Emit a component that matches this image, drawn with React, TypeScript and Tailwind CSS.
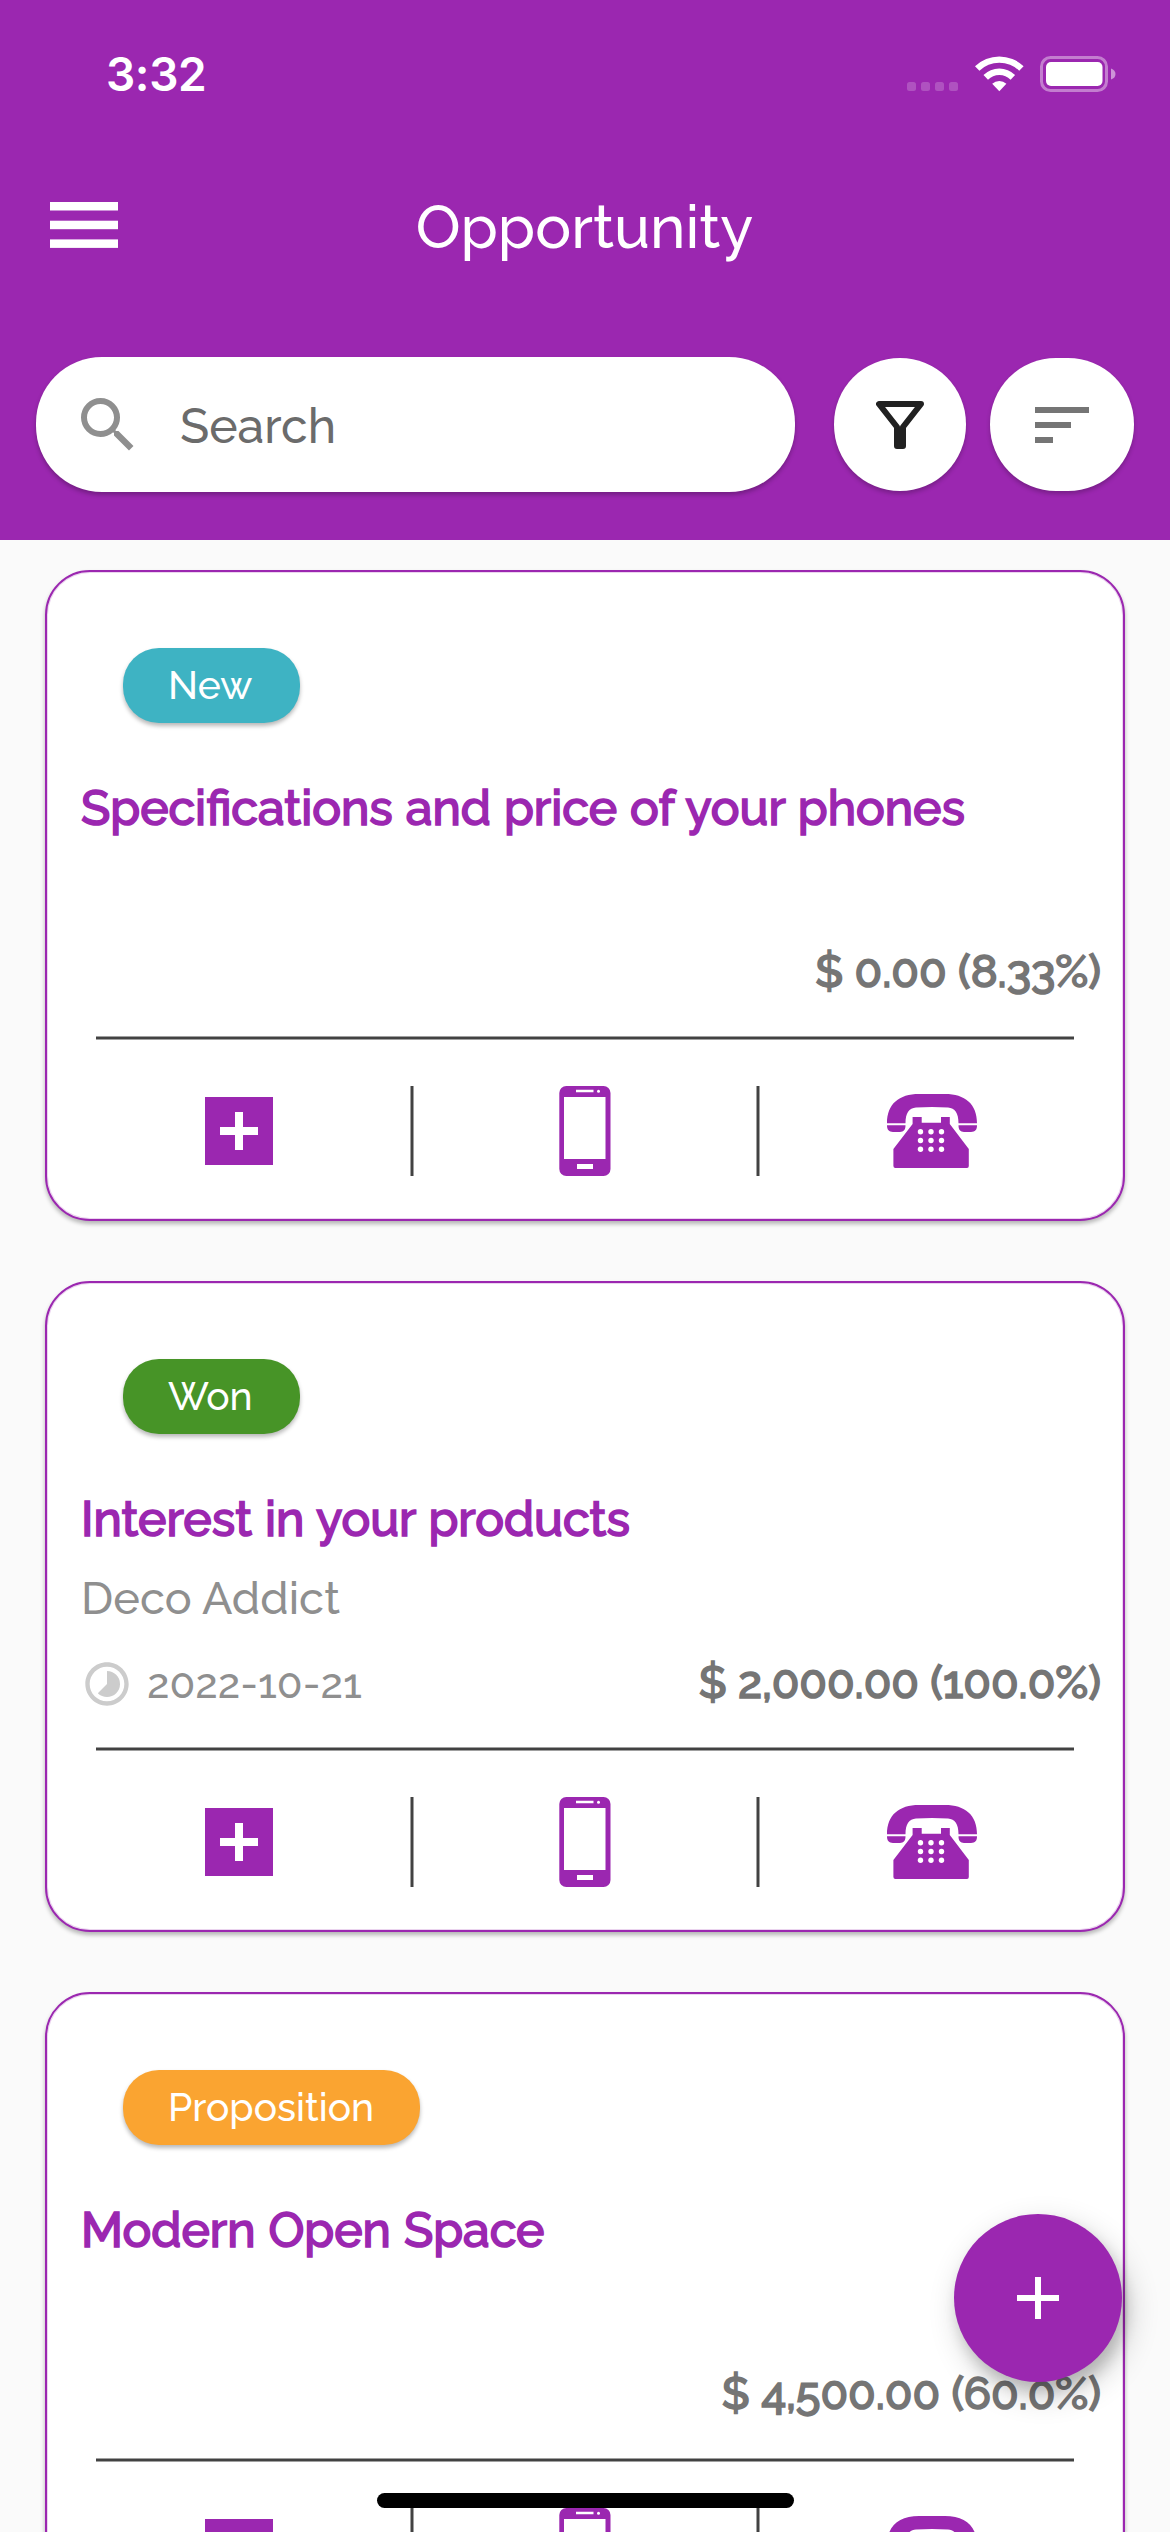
import React from "react";
import { MdSearch, MdSort, MdTimelapse } from "react-icons/md";

type Opportunity = {
  stage: string;
  badge: string;
  title: string;
  price: string;
  customer?: string;
  date?: string;
};

const opportunities: Opportunity[] = [
  {
    stage: "New",
    badge: "w-[177px] bg-[#3eb3c3]",
    title: "Specifications and price of your phones",
    price: "$ 0.00 (8.33%)",
  },
  {
    stage: "Won",
    badge: "w-[177px] bg-[#479427]",
    title: "Interest in your products",
    price: "$ 2,000.00 (100.0%)",
    customer: "Deco Addict",
    date: "2022-10-21",
  },
  {
    stage: "Proposition",
    badge: "w-[297px] bg-[#faa431]",
    title: "Modern Open Space",
    price: "$ 4,500.00 (60.0%)",
  },
];

function StatusBar() {
  return (
    <div className="flex h-[150px] items-start justify-between pl-[106px] pr-[54px] pt-[55px] text-white">
      <span className="mt-[-9px] font-['Inter'] text-[46px] font-semibold leading-[56px] tracking-[-0.4px]">3:32</span>
      <svg width="209" height="38" viewBox="0 0 209 38" fill="white">
        <g opacity="0.2">
          <rect x="0" y="27" width="9" height="9" rx="2.5" />
          <rect x="14" y="27" width="9" height="9" rx="2.5" />
          <rect x="28" y="27" width="9" height="9" rx="2.5" />
          <rect x="42" y="27" width="9" height="9" rx="2.5" />
        </g>
        <path d="M68 11.2a35 35 0 0 1 48.6 0l-4.4 4.6a28.5 28.5 0 0 0-39.800 0z" />
        <path d="M76.500 20a22.500 22.500 0 0 1 31.600 0l-4.500 4.700a16 16 0 0 0-22.600 0z" />
        <path d="M85.200 28.800a10.500 10.500 0 0 1 14.200 0l-7.100 7.400z" />
        <rect x="134.500" y="2.500" width="65" height="33" rx="9" fill="none" stroke="white" strokeWidth="3" opacity="0.4" />
        <rect x="139" y="7" width="56.500" height="24" rx="5" />
        <path d="M204 13.500q4.500 1.500 4.500 5.500t-4.500 5.500z" opacity="0.5" />
      </svg>
    </div>
  );
}

function Header() {
  return (
    <header className="h-[540px] bg-[#9b27b0]">
      <StatusBar />
      <div className="flex h-[150px] items-center px-[50px]">
        <svg width="68" height="46" viewBox="0 0 68 46" fill="white">
          <rect y="0" width="68" height="8.500" />
          <rect y="18.700" width="68" height="8.500" />
          <rect y="37.400" width="68" height="8.500" />
        </svg>
        <h1 className="mt-[4px] flex-1 pr-[69px] text-center text-[60px] font-medium leading-[72px] text-white">Opportunity</h1>
      </div>
      <div className="flex items-center pl-[36px] pr-[36px] pt-[57px]">
        <div className="flex h-[135px] w-[759px] items-center rounded-[66px] bg-white pl-[36px] shadow-[0_3px_4px_rgba(0,0,0,0.25)]">
          <MdSearch size={72} color="#8f8f8f" />
          <span className="ml-[36px] mt-[3px] text-[48px] font-medium leading-[60px] text-[#6b6b6b]">Search</span>
        </div>
        <div className="ml-[39px] flex h-[133px] w-[132px] items-center justify-center rounded-full bg-white shadow-[0_3px_4px_rgba(0,0,0,0.22)]">
          <svg width="48" height="48" viewBox="0 0 48 48">
            <path d="M3 3H45L27 26V45H21V26Z" fill="none" stroke="#212121" strokeWidth="6" strokeLinejoin="round" />
          </svg>
        </div>
        <div className="ml-[24px] flex h-[133px] w-[144px] items-center justify-center rounded-[66px] bg-white shadow-[0_3px_4px_rgba(0,0,0,0.22)]">
          <MdSort size={72} color="#757575" />
        </div>
      </div>
    </header>
  );
}

function AddIcon() {
  return (
    <svg width="68" height="68" viewBox="0 0 68 68">
      <rect width="68" height="68" fill="#9b27b0" />
      <path d="M34 15V53M15 34H53" stroke="white" strokeWidth="8" />
    </svg>
  );
}

function PhoneIcon() {
  return (
    <svg width="52" height="90" viewBox="0 0 52 90">
      <rect x="0.300" width="51.200" height="90" rx="7" fill="#9b27b0" />
      <path d="M5 11H46.500V73H5ZM17 3.800H34.500V6.300H17ZM18 78H34V83H18Z" fill="white" />
      <circle cx="39.500" cy="5.200" r="1.500" fill="white" />
    </svg>
  );
}

function TelephoneIcon() {
  return (
    <svg width="90" height="90" viewBox="0 0 90 90" fill="#9b27b0">
      <path d="M0 37.300C0 18 12 8 32 8H58C78 8 90 18 90 37.300H71.500C71.500 27 68 22 61 21.500Q45 20.500 29 21.500C22 22 18.500 27 18.500 37.300Z" />
      <path d="M0 39.300H18.500C18.500 44 16.500 46 13 46H6C2 46 0 44 0 39.300ZM71.500 39.300H90C90 44 88 46 84 46H77C73.500 46 71.500 44 71.500 39.300Z" />
      <path d="M25.600 31H34.700V36.700H54V31H62.800V38L81.800 63V80Q81.800 82 80 82H8.400Q6.400 82 6.400 80V63L25.600 38Z" />
      <g fill="white">
        {[45.700, 54.500, 63.300].map((cy) =>
          [33.500, 44, 54.500].map((cx) => <circle key={`${cx}-${cy}`} cx={cx} cy={cy} r="2.700" />)
        )}
      </g>
    </svg>
  );
}

function VerticalRule() {
  return <div className="h-[90px] w-[4px] border-x border-[#a0a0a0] bg-[#424242]" />;
}

function Card({ item }: { item: Opportunity }) {
  return (
    <article className="flex h-[651px] shrink-0 flex-col rounded-[45px] border-2 border-[#9b27b0] bg-white shadow-[0_3px_4px_rgba(0,0,0,0.28),inset_0_0_0_1px_rgba(155,39,176,0.2)]">
      <div className={`ml-[76px] mt-[76px] flex h-[75px] shrink-0 items-center rounded-[36px] pb-[1px] pl-[45px] text-[39px] font-medium text-white shadow-[0_3px_4px_rgba(0,0,0,0.28)] ${item.badge}`}>
        {item.stage}
      </div>
      <h2 className="ml-[34px] mt-[55px] h-[61px] whitespace-nowrap text-[48px] font-medium leading-[60px] text-[#9b27b0] [-webkit-text-stroke:1.6px_#9b27b0] [word-spacing:0.9px]">{item.title}</h2>
      <div className="ml-[34px] mt-[21px] h-[55px] text-[45px] font-medium leading-[56px] tracking-[0.1px] text-[#8f8f8f]">{item.customer}</div>
      <div className="ml-[34px] mr-[22px] mt-[28px] flex h-[60px] items-center justify-between">
        <div className="flex items-center">
          {item.date && (
            <>
              <MdTimelapse size={52} color="#cccccc" />
              <span className="-mt-[2px] ml-[14px] text-[42px] font-medium text-[#8f8f8f]">{item.date}</span>
            </>
          )}
        </div>
        <span className="-mt-[3px] whitespace-nowrap text-[45px] font-medium leading-[60px] text-[#757575] [-webkit-text-stroke:1.6px_#757575]">{item.price}</span>
      </div>
      <div className="ml-[49px] mr-[49px] mt-[33px] h-[4px] shrink-0 border-y border-[#a0a0a0] bg-[#424242]" />
      <div className="mt-[46px] flex h-[90px] shrink-0 items-center px-[20px]">
        <div className="flex flex-1 justify-center"><AddIcon /></div>
        <VerticalRule />
        <div className="flex w-[342px] justify-center"><PhoneIcon /></div>
        <VerticalRule />
        <div className="flex flex-1 justify-center"><TelephoneIcon /></div>
      </div>
    </article>
  );
}

export default function App() {
  return (
    <div className="relative h-[2532px] w-[1170px] overflow-hidden bg-[#fafafa] font-['Raleway','Lato',sans-serif]">
      <Header />
      <main className="flex flex-col gap-[60px] px-[45px] pt-[30px]">
        {opportunities.map((item) => (
          <Card key={item.title} item={item} />
        ))}
      </main>
      <button className="absolute left-[954px] top-[2214px] flex h-[168px] w-[168px] items-center justify-center rounded-full bg-[#9b27b0] shadow-[6px_12px_32px_rgba(0,0,0,0.2),4px_10px_14px_rgba(0,0,0,0.16)]">
        <svg width="42" height="42" viewBox="0 0 42 42">
          <path d="M21 0V42M0 21H42" stroke="white" strokeWidth="6" />
        </svg>
      </button>
      <div className="absolute left-[377px] top-[2493px] h-[15px] w-[417px] rounded-full bg-black" />
    </div>
  );
}
